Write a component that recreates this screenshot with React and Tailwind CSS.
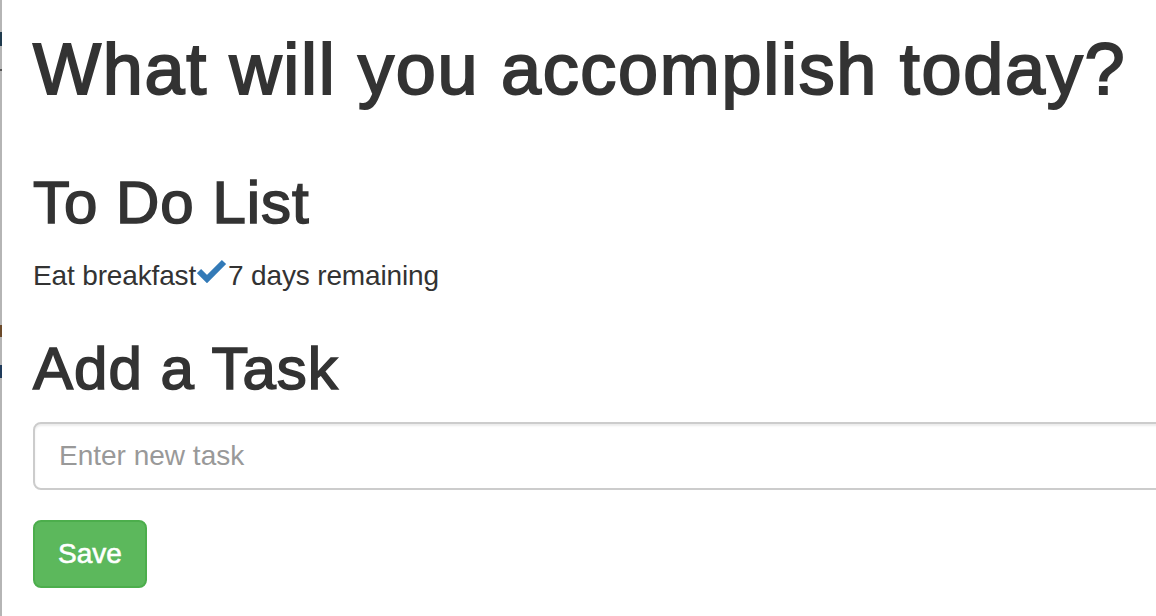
export default function App() {
  const font = { fontFamily: '"Liberation Sans", Arial, sans-serif' }

  return (
    <div className="flex h-[616px] w-[1156px] overflow-hidden bg-white text-[#333]" style={font}>
      {/* clipped edge of the window behind */}
      <div className="flex w-[2px] shrink-0 flex-col bg-[#b5b5b5]">
        <div className="mt-[32px] h-[14px] bg-[#1f3a4d]" />
        <div className="mt-[23px] h-[2px] bg-[#555]" />
        <div className="mt-[254px] h-[12px] bg-[#6b4a2a]" />
        <div className="mt-[28px] h-[13px] bg-[#1f3a5a]" />
      </div>

      <div className="min-w-0 flex-1 pl-[31px]">
        <h1 className="mt-[30px] text-[72px] leading-[79px] tracking-[1.7px] whitespace-nowrap [-webkit-text-stroke:2px_#333]">
          What will you accomplish today?
        </h1>

        <h2 className="mt-[61px] text-[60px] leading-[66px] tracking-[1px] [-webkit-text-stroke:1.6px_#333]">To Do List</h2>

        <div className="mt-[20px] flex items-center text-[28px] leading-[40px] tracking-[-0.15px]">
          <span>Eat breakfast</span>
          <svg width="30" height="24" viewBox="0 0 30 24" className="mx-[1px] -mt-[10px]">
            <path d="M2 12 L10 20 L27 3" fill="none" stroke="#337ab7" strokeWidth="6" strokeLinejoin="miter" />
          </svg>
          <span>7 days remaining</span>
        </div>

        <h2 className="mt-[40px] text-[60px] leading-[66px] tracking-[1px] [-webkit-text-stroke:1.6px_#333]">Add a Task</h2>

        <input
          type="text"
          placeholder="Enter new task"
          className="mt-[20px] block h-[68px] w-[1200px] rounded-[8px] border-2 border-[#ccc] bg-white px-[24px] text-[28px] text-[#555] shadow-[inset_0_2px_2px_rgba(0,0,0,0.075)] outline-none placeholder:text-[#999]"
        />

        <button
          type="button"
          className="mt-[30px] h-[68px] rounded-[8px] border-2 border-[#4cae4c] bg-[#5cb85c] px-[23px] text-[28px] text-white [-webkit-text-stroke:0.6px_white]"
        >
          Save
        </button>
      </div>
    </div>
  )
}
